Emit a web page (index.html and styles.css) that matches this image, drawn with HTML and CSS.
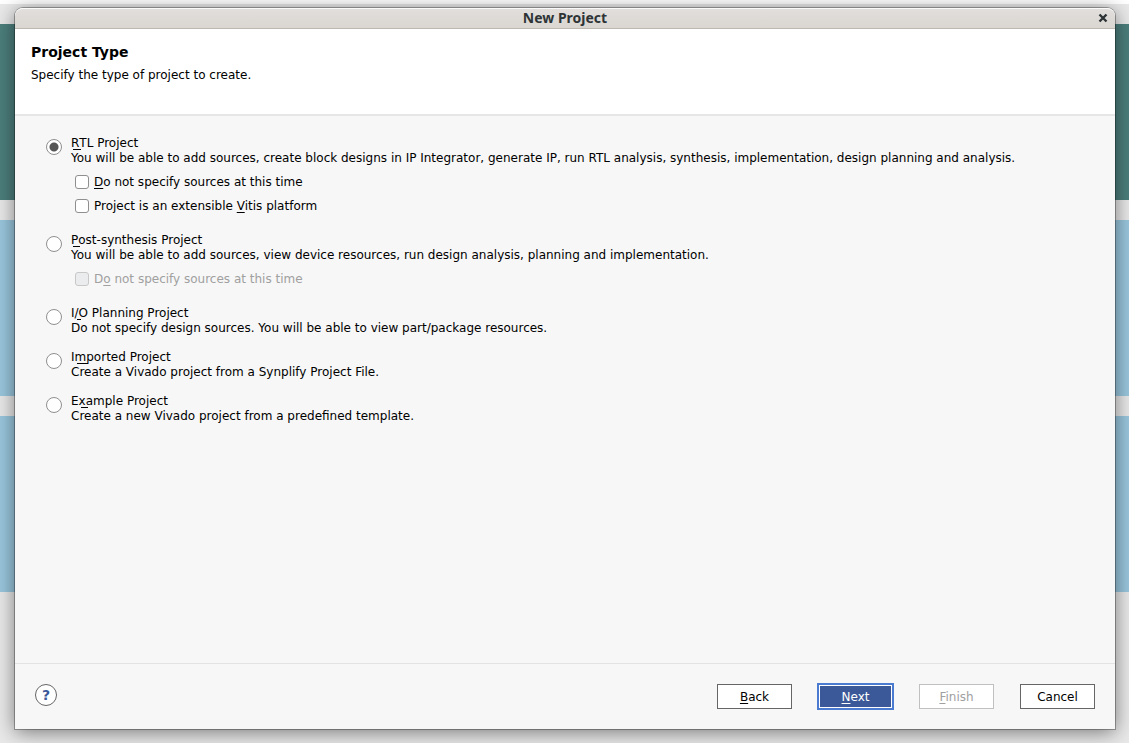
FILE: index.html
```html
<!DOCTYPE html>
<html lang="en">
<head>
  <meta charset="UTF-8" />
  <meta name="viewport" content="width=device-width, initial-scale=1.0" />
  <title>New Project</title>
  <link rel="stylesheet" href="styles.css">
</head>
<body>

  <!-- Window behind the dialog -->
  <div class="backdrop">
    <div class="band band-teal"></div>
    <div class="band band-blue"></div>
    <div class="band band-blue"></div>
  </div>

  <form class="dialog">
    <div class="titlebar">
      <span class="titlebar-text">New Project</span>
      <button type="button" class="close-btn" aria-label="Close">
        <svg width="10" height="10" viewBox="0 0 10 10">
          <path d="M1.5 1.5 L8.5 8.5 M8.5 1.5 L1.5 8.5" stroke="#2e3436" stroke-width="2.4" fill="none" />
        </svg>
      </button>
    </div>

    <header class="intro">
      <h1>Project Type</h1>
      <p>Specify the type of project to create.</p>
    </header>

    <main class="options">
      <div class="option">
        <input type="radio" name="type" id="rtl" checked />
        <div class="option-body">
          <label for="rtl">
            <span class="option-title"><u>R</u>TL Project</span>
            <span class="option-text">You will be able to add sources, create block designs in IP Integrator, generate IP, run RTL analysis, synthesis, implementation, design planning and analysis.</span>
          </label>
          <div class="sub-options">
            <div class="check">
              <input type="checkbox" id="rtl-nosrc" />
              <label for="rtl-nosrc"><u>D</u>o not specify sources at this time</label>
            </div>
            <div class="check">
              <input type="checkbox" id="rtl-vitis" />
              <label for="rtl-vitis">Project is an extensible <u>V</u>itis platform</label>
            </div>
          </div>
        </div>
      </div>

      <div class="option">
        <input type="radio" name="type" id="post" />
        <div class="option-body">
          <label for="post">
            <span class="option-title"><u>P</u>ost-synthesis Project</span>
            <span class="option-text">You will be able to add sources, view device resources, run design analysis, planning and implementation.</span>
          </label>
          <div class="sub-options">
            <div class="check">
              <input type="checkbox" id="post-nosrc" disabled />
              <label for="post-nosrc">D<u>o</u> not specify sources at this time</label>
            </div>
          </div>
        </div>
      </div>

      <div class="option">
        <input type="radio" name="type" id="io" />
        <div class="option-body">
          <label for="io">
            <span class="option-title">I<u>/</u>O Planning Project</span>
            <span class="option-text">Do not specify design sources. You will be able to view part/package resources.</span>
          </label>
        </div>
      </div>

      <div class="option">
        <input type="radio" name="type" id="imported" />
        <div class="option-body">
          <label for="imported">
            <span class="option-title">I<u>m</u>ported Project</span>
            <span class="option-text">Create a Vivado project from a Synplify Project File.</span>
          </label>
        </div>
      </div>

      <div class="option">
        <input type="radio" name="type" id="example" />
        <div class="option-body">
          <label for="example">
            <span class="option-title">E<u>x</u>ample Project</span>
            <span class="option-text">Create a new Vivado project from a predefined template.</span>
          </label>
        </div>
      </div>
    </main>

    <footer class="actions">
      <button type="button" class="help-btn">?</button>
      <div class="buttons">
        <button type="button" class="btn"><u>B</u>ack</button>
        <button type="submit" class="btn btn-primary"><u>N</u>ext</button>
        <button type="button" class="btn" disabled><u>F</u>inish</button>
        <button type="button" class="btn">Cancel</button>
      </div>
    </footer>
  </form>

</body>
</html>
```

FILE: styles.css
```css
* {
  box-sizing: border-box;
}

body {
  margin: 0;
  height: 100vh;
  overflow: hidden;
  background: #e9e9e9;
  color: #000;
  font-family: "DejaVu Sans", sans-serif;
  font-size: 12px;
  line-height: 15px;
}

/* Window behind the dialog */
.backdrop {
  display: flex;
  flex-direction: column;
  gap: 20px;
  padding-top: 20px;
  border-top: 4px solid #fff;
}

.band {
  height: 176px;
}

.band-teal {
  background: #4c7f7d;
}

.band-blue {
  background: #9ac7de;
}

/* Dialog */
.dialog {
  position: absolute;
  inset: 8px 14px 14px 15px;
  display: flex;
  flex-direction: column;
  background: #f7f7f7;
  border-radius: 8px 8px 0 0;
  box-shadow: 0 0 0 1px rgba(0, 0, 0, 0.3), 0 3px 20px rgba(0, 0, 0, 0.5);
}

.titlebar {
  display: grid;
  grid-template-columns: 24px 1fr 24px;
  align-items: center;
  height: 21px;
  padding-bottom: 2px;
  border-top: 1px solid #fafafa;
  border-bottom: 1px solid #bfb8b1;
  border-radius: 8px 8px 0 0;
  background: linear-gradient(#e1dedb, #dad6d2);
}

.titlebar-text {
  grid-column: 2;
  color: #2e3436;
  font-family: "Noto Sans", sans-serif;
  font-size: 14px;
  font-weight: bold;
  text-align: center;
}

.close-btn {
  display: flex;
  justify-content: center;
  padding: 0;
  border: none;
  background: none;
}

.intro {
  height: 87px;
  padding: 16px;
  border-bottom: 2px solid #e6e6e6;
  background: #fff;
}

.intro h1 {
  margin: 0 0 8px;
  font-size: 14px;
  line-height: 15px;
}

.intro p {
  margin: 0;
}

/* Project types */
.options {
  flex: 1;
  display: flex;
  flex-direction: column;
  gap: 14px;
  padding: 20px 31px;
}

.option {
  display: flex;
  gap: 9px;
}

.option-title,
.option-text {
  display: block;
}

u {
  text-underline-offset: 2px;
  text-decoration-thickness: 1px;
  text-decoration-skip-ink: none;
}

.option-title u {
  margin-right: -2px;
  padding-right: 2px;
  background: linear-gradient(#000, #000) 2px 100% / 100% 1px no-repeat;
  text-decoration: none;
}

input {
  appearance: none;
  flex: none;
  margin: 0;
  border: 1px solid #8f8f8f;
  background: #fff;
}

input[type="radio"] {
  width: 16px;
  height: 16px;
  margin-top: 3px;
  border-radius: 50%;
}

input[type="radio"]:checked {
  background: radial-gradient(circle, #555 4px, #fff 5px);
}

input[type="checkbox"] {
  width: 14px;
  height: 14px;
  border-radius: 3px;
}

input:disabled {
  border-color: #c8c8c8;
  background: #ebecee;
}

input:disabled + label {
  color: #a0a0a0;
}

.sub-options {
  margin: 4px 0 1px;
  padding-left: 4px;
}

.check {
  display: flex;
  align-items: center;
  gap: 5px;
  height: 24px;
}

.check label {
  padding-top: 1px;
}

/* Footer */
.actions {
  display: flex;
  align-items: flex-start;
  justify-content: space-between;
  height: 66px;
  padding: 20px 20px 0;
  border-top: 1px solid #e3e3e3;
}

.help-btn {
  width: 22px;
  height: 22px;
  padding: 0;
  border: 1px solid #666;
  border-radius: 50%;
  background: #fff;
  color: #3b5998;
  font-family: inherit;
  font-size: 14px;
  font-weight: bold;
  line-height: 15px;
}

.buttons {
  display: flex;
  gap: 26px;
}

.btn {
  width: 75px;
  height: 25px;
  padding: 1px 0 0;
  border: 1px solid #666;
  background: #fff;
  color: #000;
  font-family: inherit;
  font-size: 12px;
  line-height: 15px;
}

.btn-primary {
  border-color: #4a7bd0;
  outline: 1px solid #4a7bd0;
  box-shadow: inset 0 0 0 1px #fff;
  background: #3b5998;
  color: #fff;
}

.btn:disabled {
  border-color: #c0c0c0;
  color: #a0a0a0;
}
```
